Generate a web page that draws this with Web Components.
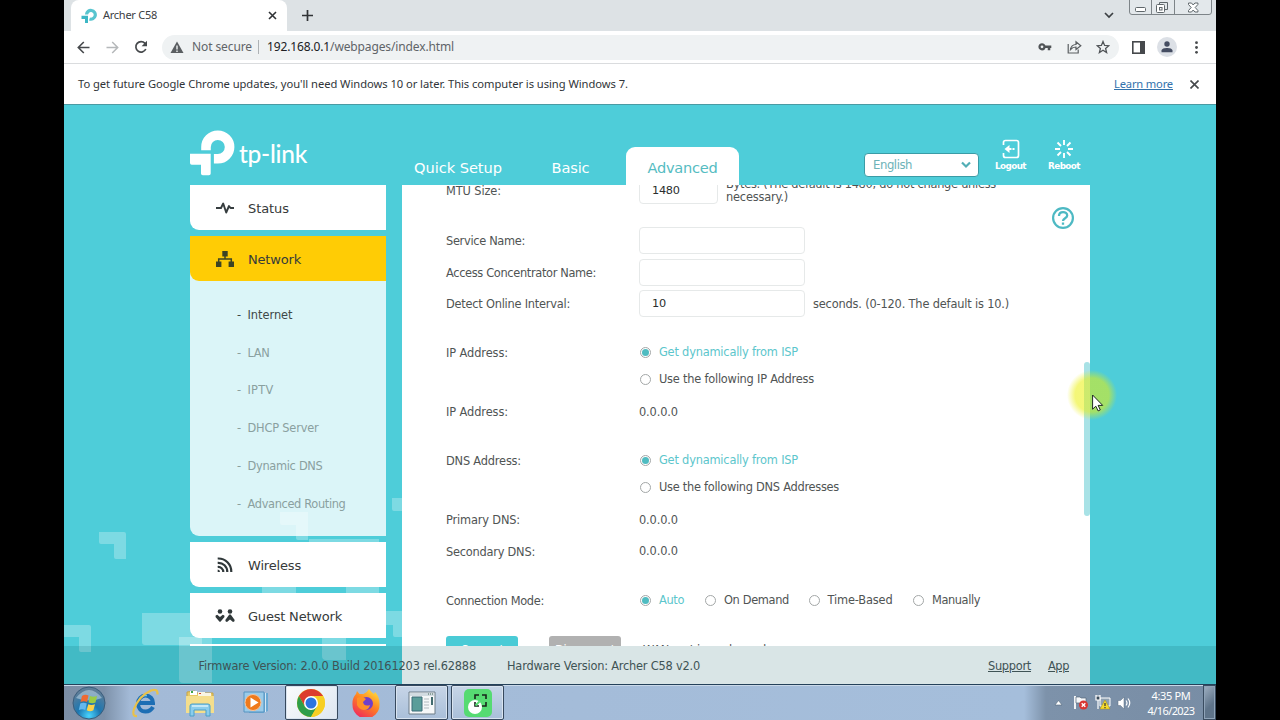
<!DOCTYPE html>
<html lang="en">
<head>
<meta charset="utf-8">
<title>Archer C58</title>
<style>
    body {
        margin: 0;
        width: 1280px;
        height: 720px;
        overflow: hidden;
        background: #000;
    }
</style>
</head>
<body>
<desktop-screen>
    <tab-strip></tab-strip>
    <address-bar></address-bar>
    <info-bar></info-bar>
    <router-page>
        <page-header slot="header"></page-header>
        <side-menu slot="menu"></side-menu>
        <form-panel slot="content">
            <form-row style="--gap: -8px">
                <fit-text slot="label" w="55">MTU Size:</fit-text>
                <text-box w="79">1480</text-box>
                <span class="hint two"><fit-text w="270">Bytes. (The default is 1480, do not change unless</fit-text><br><fit-text w="62">necessary.)</fit-text></span>
            </form-row>
            <form-row style="--gap: 23px">
                <fit-text slot="label" w="79">Service Name:</fit-text>
                <text-box w="166"></text-box>
            </form-row>
            <form-row style="--gap: 4.5px">
                <fit-text slot="label" w="150">Access Concentrator Name:</fit-text>
                <text-box w="166"></text-box>
            </form-row>
            <form-row style="--gap: 4.5px">
                <fit-text slot="label" w="124">Detect Online Interval:</fit-text>
                <text-box w="166">10</text-box>
                <span><fit-text w="196">seconds. (0-120. The default is 10.)</fit-text></span>
            </form-row>
            <form-row style="--gap: 21.5px">
                <fit-text slot="label" w="62">IP Address:</fit-text>
                <radio-item checked><fit-text w="139">Get dynamically from ISP</fit-text></radio-item>
            </form-row>
            <form-row>
                <radio-item><fit-text w="155">Use the following IP Address</fit-text></radio-item>
            </form-row>
            <form-row style="--gap: 5.5px">
                <fit-text slot="label" w="62">IP Address:</fit-text>
                <fit-text w="39">0.0.0.0</fit-text>
            </form-row>
            <form-row style="--gap: 21.5px">
                <fit-text slot="label" w="75">DNS Address:</fit-text>
                <radio-item checked><fit-text w="139">Get dynamically from ISP</fit-text></radio-item>
            </form-row>
            <form-row>
                <radio-item><fit-text w="180">Use the following DNS Addresses</fit-text></radio-item>
            </form-row>
            <form-row style="--gap: 5.5px">
                <fit-text slot="label" w="74">Primary DNS:</fit-text>
                <fit-text w="39">0.0.0.0</fit-text>
            </form-row>
            <form-row style="--gap: 4.5px">
                <fit-text slot="label" w="89">Secondary DNS:</fit-text>
                <fit-text w="39">0.0.0.0</fit-text>
            </form-row>
            <form-row style="--gap: 22px">
                <fit-text slot="label" w="98">Connection Mode:</fit-text>
                <radio-item checked><fit-text w="25">Auto</fit-text></radio-item>
                <radio-item style="margin-left: 12px"><fit-text w="65">On Demand</fit-text></radio-item>
                <radio-item style="margin-left: 10.5px"><fit-text w="65">Time-Based</fit-text></radio-item>
                <radio-item style="margin-left: 11.5px"><fit-text w="48">Manually</fit-text></radio-item>
            </form-row>
            <action-row slot="actions"></action-row>
        </form-panel>
        <page-footer slot="footer"></page-footer>
    </router-page>
    <task-bar></task-bar>
    <mouse-pointer slot="pointer"></mouse-pointer>
</desktop-screen>

<script>
class DesktopScreen extends HTMLElement {
    constructor() {
        super();
        this.attachShadow({mode: 'open'});
        this.shadowRoot.innerHTML = `
            <style>
                :host {
                    display: flex;
                    flex-direction: column;
                    position: relative;
                    box-sizing: border-box;
                    width: 1280px;
                    height: 720px;
                    padding: 0 64px;
                    overflow: hidden;
                    background: #000;
                    font: 11.4px "DejaVu Sans", sans-serif;
                    color: #505454;
                }
            </style>
            <slot></slot>
            <slot name="pointer"></slot>`;
    }
}

class TabStrip extends HTMLElement {
    constructor() {
        super();
        this.attachShadow({mode: 'open'});
        this.shadowRoot.innerHTML = `
            <style>
                :host {
                    display: flex;
                    height: 31px;
                    flex: none;
                    background: #dde2e5;
                    font: 11px "Noto Sans", sans-serif;
                    color: #3c4043;
                }
                .tab {
                    display: flex;
                    align-items: center;
                    box-sizing: border-box;
                    width: 216px;
                    margin-left: 7px;
                    padding: 0 10px 0 10px;
                    background: #fff;
                    border-radius: 8px 8px 0 0;
                }
                .tab fit-text { margin: -2px 0 0 6px; }
                .tab .x { margin-left: auto; }
                .plus { margin: 9px 0 0 14px; }
                .list { margin: 11px 15px 0 auto; }
                .win { margin-right: 4px; }
            </style>
            <div class="tab">
                <svg width="16" height="16" viewBox="0 0 16 16" fill="none">
                    <path d="M5.500 6.500A4.400 4.400 0 1 1 8.500 11" stroke="#58c5cf" stroke-width="3.200"/>
                    <path d="M.5 7.700H7v7.400H4V11H.5z" fill="#3cb7c5"/>
                </svg>
                <fit-text w="54">Archer C58</fit-text>
                <svg class="x" width="9" height="9" viewBox="0 0 9 9" stroke="#303336" stroke-width="1.600"><path d="M1 1l7 7M8 1L1 8"/></svg>
            </div>
            <svg class="plus" width="13" height="13" viewBox="0 0 13 13" stroke="#303336" stroke-width="1.700"><path d="M6.500 1v11M1 6.500h11"/></svg>
            <svg class="list" width="10" height="8" viewBox="0 0 10 8" fill="none" stroke="#3c4043" stroke-width="1.700"><path d="M1 2l4 4 4-4"/></svg>
            <svg class="win" width="83" height="16" viewBox="0 0 83 16" fill="none" stroke="#7d8488">
                <path d="M.5-1v13q0 2.500 2.500 2.500h77q2.500 0 2.500-2.500V-1M22.500 0v14.500M45.500 0v14.500" fill="#e3e8eb"/>
                <rect x="6.500" y="7.500" width="10" height="4" rx="1" stroke="#5f676b" fill="#fff"/>
                <path d="M30.500 5V2.500h8v7H36" stroke="#5f676b"/><rect x="27.500" y="4.500" width="8" height="8" rx="1" fill="#fff" stroke="#5f676b"/><rect x="30.500" y="7.500" width="2.500" height="2.500" stroke="#5f676b"/>
                <path d="M59.500 3h3l1.700 2 1.700-2h3v1.500l-2.700 3 2.700 3V12h-3l-1.700-2-1.700 2h-3v-1.500l2.700-3-2.700-3z" stroke="#5f676b" fill="#fff"/>
            </svg>`;
    }
}

class AddressBar extends HTMLElement {
    constructor() {
        super();
        this.attachShadow({mode: 'open'});
        this.shadowRoot.innerHTML = `
            <style>
                :host {
                    display: flex;
                    align-items: center;
                    box-sizing: border-box;
                    height: 33px;
                    flex: none;
                    background: #fff;
                    border-bottom: 1px solid #dadcde;
                    font: 12px "Noto Sans", sans-serif;
                    color: #606468;
                }
                svg { flex: none; }
                .field {
                    display: flex;
                    align-items: center;
                    box-sizing: border-box;
                    width: 957px;
                    height: 25px;
                    margin-left: 14px;
                    padding: 0 3px 0 8px;
                    border-radius: 13px;
                    background: #eff2f3;
                }
                .field fit-text { margin-bottom: 1px; }
                .sep { width: 1px; height: 14px; margin: 0 8px 0 6px; background: #aeb2b5; }
                b { font-weight: normal; color: #202124; }
                .key { margin-left: auto; }
                .avatar {
                    display: flex;
                    justify-content: center;
                    align-items: center;
                    width: 20px;
                    height: 20px;
                    margin: 0 20px 0 12px;
                    border-radius: 50%;
                    background: #dce0e6;
                }
            </style>
            <svg style="margin-left:13px" width="13" height="13" viewBox="0 0 13 13" fill="none" stroke="#46494c" stroke-width="1.600"><path d="M12.500 6.500H1.500M6.800 1L1.300 6.500 6.800 12"/></svg>
            <svg style="margin-left:16px" width="13" height="13" viewBox="0 0 13 13" fill="none" stroke="#b5b8ba" stroke-width="1.500"><path d="M.5 6.500h11M6.200 1l5.500 5.500L6.200 12"/></svg>
            <svg style="margin-left:15px" width="14" height="14" viewBox="0 0 14 14" fill="none" stroke="#46494c" stroke-width="1.700"><path d="M11.800 9A5.200 5.200 0 1 1 11 3.400L12 5"/><path d="M13 .8v5.400H7.600z" fill="#46494c" stroke="none"/></svg>
            <div class="field">
                <svg width="14" height="13" viewBox="0 0 14 13"><path d="M7 .5L13.500 12H.5z" fill="#5a5e61"/><path d="M7 4.500v4M7 9.500V11" stroke="#eff2f3" stroke-width="1.400"/></svg>
                <fit-text w="60" style="margin-left:8px">Not secure</fit-text>
                <span class="sep"></span>
                <fit-text w="187"><b>192.168.0.1</b>/webpages/index.html</fit-text>
                <svg class="key" width="14" height="10" viewBox="0 0 14 10" fill="none" stroke="#505457"><circle cx="4" cy="4.800" r="2.500" stroke-width="2.200"/><path d="M7 4.800h6.300M11 4.800v3.500" stroke-width="2.500"/></svg>
                <svg style="margin-left:15px" width="15" height="14" viewBox="0 0 15 14" fill="none" stroke="#5a5e61" stroke-width="1.200"><path d="M1.200 4v9h10V9.500M3.500 9.500C4 6 6 4.600 9 4.500V1.800L13.800 5.800 9 9.500V7C6.500 7 5 7.700 3.500 9.500z"/></svg>
                <svg style="margin:0 6px 0 14px" width="14" height="14" viewBox="0 0 14 14" fill="none" stroke="#505457" stroke-width="1.300"><path d="M7 1.500l1.600 3.900 4.200.3-3.200 2.700 1 4.100L7 10.200l-3.600 2.300 1-4.100L1.200 5.700l4.200-.3z"/></svg>
            </div>
            <svg style="margin-left:13px" width="13" height="13" viewBox="0 0 13 13"><rect x=".8" y=".8" width="11.400" height="11.400" fill="none" stroke="#46494c" stroke-width="1.600"/><path d="M8 1h4.500v11H8z" fill="#46494c"/></svg>
            <div class="avatar"><svg width="12" height="12" viewBox="0 0 12 12" fill="#454d62"><circle cx="6" cy="3" r="2.700"/><path d="M.5 11.300V9.500C.5 7.800 3.500 7 6 7s5.500.8 5.500 2.500v1.800z"/></svg></div>
            <svg width="3" height="13" viewBox="0 0 3 13" fill="#46494c" style="margin-left:-2px"><circle cx="1.500" cy="1.700" r="1.400"/><circle cx="1.500" cy="6.500" r="1.400"/><circle cx="1.500" cy="11.300" r="1.400"/></svg>`;
    }
}

class InfoBar extends HTMLElement {
    constructor() {
        super();
        this.attachShadow({mode: 'open'});
        this.shadowRoot.innerHTML = `
            <style>
                :host {
                    display: flex;
                    align-items: center;
                    box-sizing: border-box;
                    height: 41px;
                    flex: none;
                    padding: 0 17px 0 14px;
                    background: #fff;
                    border-bottom: 1px solid #4b9aa3;
                    font: 11.200px "Noto Sans", sans-serif;
                    color: #303438;
                }
                fit-text { margin-bottom: 2px; }
                a { margin-left: auto; color: #3272ac; text-decoration: underline; }
                svg { margin-left: 17px; }
            </style>
            <fit-text w="550">To get future Google Chrome updates, you'll need Windows 10 or later. This computer is using Windows 7.</fit-text>
            <a><fit-text w="59">Learn more</fit-text></a>
            <svg width="9" height="9" viewBox="0 0 9 9" stroke="#46494c" stroke-width="1.600"><path d="M.5.5l8 8M8.500.5l-8 8"/></svg>`;
    }
}

class RouterPage extends HTMLElement {
    constructor() {
        super();
        this.attachShadow({mode: 'open'});
        this.shadowRoot.innerHTML = `
            <style>
                :host {
                    display: flex;
                    flex-direction: column;
                    position: relative;
                    height: 579px;
                    flex: none;
                    overflow: hidden;
                    background: #4ecdd9;
                }
                .pattern { position: absolute; inset: 0; }
                .body {
                    display: flex;
                    gap: 15.500px;
                    height: 499px;
                    padding-left: 126px;
                    position: relative;
                }
            </style>
            <svg class="pattern" width="1152" height="579" viewBox="64 105 1152 579" fill="#fff" fill-opacity=".27">
                <path d="M99 532h25q2 0 2 2v25h-10q-2 0-2-2v-13h-13q-2 0-2-2z"/>
                <path d="M64 625h25q2 0 2 2v25H81q-2 0-2-2v-13H64z"/>
                <path d="M142 613h60v32h-57q-3 0-3-3z"/>
                <path d="M179 637h33v46h-29q-4 0-4-4z"/>
                <path d="M280 512h28v28h-10q-2 0-2-2v-13h-14q-2 0-2-2z"/>
                <path d="M309 539h70v54h-33v-32h-34q-3 0-3-3z"/>
                <path d="M262 580h34v20h-34zM322 637h24v23h-20q-4 0-4-4z"/>
                <path d="M392 498h10v13h-8q-2 0-2-2zM386 611h16v26h-7q-2 0-2-2v-10h-7z"/>
            </svg>
            <slot name="header"></slot>
            <div class="body"><slot name="menu"></slot><slot name="content"></slot></div>
            <slot name="footer"></slot>`;
    }
}

class PageHeader extends HTMLElement {
    constructor() {
        super();
        this.attachShadow({mode: 'open'});
        this.shadowRoot.innerHTML = `
            <style>
                :host {
                    display: flex;
                    align-items: flex-end;
                    position: relative;
                    box-sizing: border-box;
                    height: 80px;
                    flex: none;
                    padding-left: 126px;
                    color: #fff;
                    font-size: 14.600px;
                }
                .logo { display: flex; align-items: flex-start; height: 55px; width: 211px; }
                .logo fit-text { margin: 9px 0 0 4px; font: 500 24.500px/30px Lato, sans-serif; }
                .tab {
                    display: flex;
                    align-items: center;
                    justify-content: center;
                    box-sizing: border-box;
                    height: 38px;
                    padding-top: 3px;
                }
                .quick { width: 114px; }
                .basic { width: 111px; }
                .active {
                    width: 113px;
                    color: #55bcc2;
                    background: #fff;
                    border-radius: 9px 9px 0 0;
                }
                .lang {
                    display: flex;
                    align-items: center;
                    justify-content: space-between;
                    box-sizing: border-box;
                    width: 115px;
                    height: 24px;
                    margin: 0 0 8px 125px;
                    padding: 0 7px 0 8px;
                    border: 1px solid #3a9ca6;
                    border-radius: 4px;
                    background: #fff;
                    color: #6db3b8;
                    font-size: 11.700px;
                }
                .tool {
                    display: flex;
                    flex-direction: column;
                    align-items: center;
                    gap: 2px;
                    height: 46px;
                    font-size: 8.800px;
                    font-weight: bold;
                    line-height: 11px;
                }
            </style>
            <div class="logo">
                <svg width="45" height="46" viewBox="190 129.500 45 46">
                    <path d="M206 149.800v-3.300A11.800 11.800 0 1 1 217.800 158.300H213.900" fill="none" stroke="#fff" stroke-width="9.600"/>
                    <path d="M190 153.300h20.700v19.600q0 1.800-1.800 1.800h-6.100q-1.800 0-1.800-1.800v-8.600h-9.200q-1.800 0-1.800-1.800z" fill="#fff"/>
                </svg>
                <fit-text w="68">tp-link</fit-text>
            </div>
            <div class="tab quick"><fit-text w="88">Quick Setup</fit-text></div>
            <div class="tab basic"><fit-text w="38">Basic</fit-text></div>
            <div class="tab active"><fit-text w="70">Advanced</fit-text></div>
            <div class="lang">
                <fit-text w="39">English</fit-text>
                <svg width="10" height="8" viewBox="0 0 10 8" fill="none" stroke="#52aeb5" stroke-width="2.200"><path d="M1 1.500l4 4 4-4"/></svg>
            </div>
            <div class="tool" style="margin-left:16px">
                <svg width="18" height="20" viewBox="0 0 18 20" fill="none" stroke="#fff" stroke-width="1.700">
                    <path d="M1.500 6V3.500q0-2 2-2h11q2 0 2 2v13q0 2-2 2h-11q-2 0-2-2V14"/>
                    <path d="M12.500 10h-2M9.500 10h-4" stroke-width="1.800"/><path d="M7.500 6v8L2.500 10z" fill="#fff" stroke="none"/>
                </svg>
                <fit-text w="31">Logout</fit-text>
            </div>
            <div class="tool" style="margin-left:22px">
                <svg width="20" height="20" viewBox="-10 -10 20 20" stroke="#fff" stroke-width="1.900">
                    <path d="M0-9v5M0 9V4M-9 0h5M9 0H4M-6.500-6.500L-3-3M6.500 6.500L3 3M6.500-6.500L3-3M-6.500 6.500L-3 3"/>
                </svg>
                <fit-text w="32">Reboot</fit-text>
            </div>`;
    }
}

class MenuItem extends HTMLElement {
    constructor() {
        super();
        this.attachShadow({mode: 'open'});
        this.shadowRoot.innerHTML = `
            <style>
                :host {
                    display: flex;
                    align-items: center;
                    box-sizing: border-box;
                    height: 45px;
                    flex: none;
                    padding: 2px 0 0 25px;
                    background: #fff;
                    border-radius: 0 0 0 9px;
                    color: #363a3a;
                    font-size: 13px;
                }
                :host([active]) { background: #ffcc05; }
                .icon { display: flex; justify-content: center; width: 20px; margin: 0 13px 1px 0; }
            </style>
            <span class="icon"><slot name="icon"></slot></span><slot></slot>`;
    }
}

class SideMenu extends HTMLElement {
    constructor() {
        super();
        this.attachShadow({mode: 'open'});
        this.shadowRoot.innerHTML = `
            <style>
                :host {
                    display: flex;
                    flex-direction: column;
                    width: 196px;
                    height: 461px;
                    flex: none;
                    overflow: hidden;
                }
                .group {
                    flex: none;
                    height: 299.500px;
                    margin: 6px 0;
                    background: rgba(255, 255, 255, .8);
                    border-radius: 0 0 0 9px;
                }
                .group > div {
                    display: flex;
                    align-items: center;
                    height: 37.800px;
                    padding-left: 47px;
                    color: #8aa09f;
                }
                .group > div:nth-of-type(1) { margin-top: 15px; color: #3f4848; }
                i { font-style: normal; width: 10.500px; }
                menu-item + menu-item { margin-top: 6px; }
            </style>
            <menu-item>
                <svg slot="icon" width="20" height="14" viewBox="0 0 20 14" fill="none" stroke="#363d3f" stroke-width="1.900" stroke-linejoin="round"><path d="M1 7h5l2.200-4.500 3 9L14 5l1.500 2H19"/></svg>
                <fit-text w="41">Status</fit-text>
            </menu-item>
            <div class="group">
                <menu-item active>
                    <svg slot="icon" width="18" height="16" viewBox="0 0 18 16" fill="#3d4424"><path d="M6.300 0h5.400v5.500H6.300zM0 10.500h5.400V16H0zM12.600 10.500H18V16h-5.400z"/><path d="M9 5v3M2.700 11V8h12.600v3" fill="none" stroke="#3d4424" stroke-width="1.500"/></svg>
                    <fit-text w="53">Network</fit-text>
                </menu-item>
                <div><i>-</i><fit-text w="45">Internet</fit-text></div>
                <div><i>-</i><fit-text w="22">LAN</fit-text></div>
                <div><i>-</i><fit-text w="26">IPTV</fit-text></div>
                <div><i>-</i><fit-text w="71">DHCP Server</fit-text></div>
                <div><i>-</i><fit-text w="75">Dynamic DNS</fit-text></div>
                <div><i>-</i><fit-text w="98">Advanced Routing</fit-text></div>
            </div>
            <menu-item>
                <svg slot="icon" width="16" height="16" viewBox="0 0 16 16" fill="none" stroke="#30383a" stroke-width="2.200"><path d="M.7 1.500A13 13 0 0 1 14.300 15M.7 5.800A9 9 0 0 1 10.300 15M.7 10A5 5 0 0 1 6.300 15"/><path d="M.7 12.500q2.300 0 2.300 2.500H.7z" fill="#30383a" stroke="none"/></svg>
                <fit-text w="53">Wireless</fit-text>
            </menu-item>
            <menu-item>
                <svg slot="icon" width="20" height="14" viewBox="0 0 20 14" fill="#30383a"><circle cx="5" cy="2.500" r="2.300"/><circle cx="15" cy="2.500" r="2.300"/><path d="M2.200 5.700L5 8l2.800-2.300q2.200.3 1.700 2.300L5.700 12.500q-.7.700-1.400 0L.5 8q-.5-2 1.700-2.300zM14.300 5.500h1.400L19.700 11q0 2-1.700 2l-3-2.500L12 13q-1.700 0-1.700-2z"/></svg>
                <fit-text w="94">Guest Network</fit-text>
            </menu-item>
            <menu-item></menu-item>`;
    }
}

class FormPanel extends HTMLElement {
    constructor() {
        super();
        this.attachShadow({mode: 'open'});
        this.shadowRoot.innerHTML = `
            <style>
                :host {
                    display: block;
                    position: relative;
                    width: 688.500px;
                    height: 499px;
                    flex: none;
                    background: #fff;
                }
                .scroll { height: 461px; overflow: hidden; display: flow-root; }
                .help { position: absolute; top: 21px; right: 15px; }
                .bar {
                    position: absolute;
                    top: 177px;
                    right: 0;
                    width: 6px;
                    height: 154px;
                    border-radius: 3px;
                    background: #a8e2e6;
                }
            </style>
            <div class="scroll"><slot></slot><slot name="actions"></slot></div>
            <svg class="help" width="24" height="24" viewBox="0 0 24 24" fill="none" stroke="#4db9c3">
                <circle cx="12" cy="12" r="9.900" stroke-width="2.200"/>
                <path d="M8 10C8 4.700 16.200 5 16.200 9.500c0 2.900-4.200 2.600-4.200 5.500M12 16.500v2.300" stroke-width="2.300"/>
            </svg>
            <div class="bar"></div>`;
    }
}

class FormRow extends HTMLElement {
    constructor() {
        super();
        this.attachShadow({mode: 'open'});
        this.shadowRoot.innerHTML = `
            <style>
                :host {
                    display: grid;
                    grid-template-columns: 193px 1fr;
                    align-items: center;
                    height: 27px;
                    margin-top: var(--gap, 0);
                    padding-left: 44.500px;
                }
                .label { padding-top: 1px; }
                .value { display: flex; align-items: center; gap: 8px; }
                ::slotted(span) { line-height: 13px; padding-top: 1px; white-space: nowrap; }
            </style>
            <div class="label"><slot name="label"></slot></div>
            <div class="value"><slot></slot></div>`;
    }
}

class TextBox extends HTMLElement {
    constructor() {
        super();
        this.attachShadow({mode: 'open'});
        this.shadowRoot.innerHTML = `
            <style>
                :host {
                    display: flex;
                    align-items: center;
                    box-sizing: border-box;
                    height: 27px;
                    padding-left: 12px;
                    border: 1px solid #e6e9e9;
                    border-radius: 4px;
                    background: #fff;
                    color: #2a2e2e;
                    font-size: 11.300px;
                    letter-spacing: -.3px;
                }
            </style>
            <slot></slot>`;
    }
    connectedCallback() {
        this.style.width = this.getAttribute('w') + 'px';
    }
}

class RadioItem extends HTMLElement {
    constructor() {
        super();
        this.attachShadow({mode: 'open'});
        this.shadowRoot.innerHTML = `
            <style>
                :host { display: flex; align-items: center; }
                :host([checked]) { color: #5cc6cc; }
                .dot {
                    display: flex;
                    align-items: center;
                    justify-content: center;
                    box-sizing: border-box;
                    width: 11px;
                    height: 11px;
                    margin: 1px 8px 0 1px;
                    border: 1px solid #a3a7a7;
                    border-radius: 50%;
                }
                :host([checked]) .dot::after {
                    content: '';
                    width: 7px;
                    height: 7px;
                    border-radius: 50%;
                    background: #4fbcc1;
                }
            </style>
            <span class="dot"></span><slot></slot>`;
    }
}

class ActionRow extends HTMLElement {
    constructor() {
        super();
        this.attachShadow({mode: 'open'});
        this.shadowRoot.innerHTML = `
            <style>
                :host { display: flex; margin-top: 22.500px; padding-left: 44.500px; line-height: 28px; }
                div {
                    width: 72px;
                    height: 27px;
                    margin-right: 31px;
                    border-radius: 3px 3px 0 0;
                    background: #4acbd6;
                    color: #fff;
                    text-align: center;
                }
                .off { background: #b1b1b1; margin-right: 22px; }
            </style>
            <div><fit-text w="43">Connect</fit-text></div>
            <div class="off"><fit-text w="60">Disconnect</fit-text></div>
            <fit-text w="126">WAN port is unplugged.</fit-text>`;
    }
}

class PageFooter extends HTMLElement {
    constructor() {
        super();
        this.attachShadow({mode: 'open'});
        this.shadowRoot.innerHTML = `
            <style>
                :host {
                    display: flex;
                    align-items: center;
                    position: absolute;
                    left: 0;
                    right: 0;
                    bottom: 0;
                    box-sizing: border-box;
                    height: 38px;
                    padding: 2px 147px 0 134.500px;
                    background: rgba(0, 80, 85, .15);
                    color: #3f5355;
                }
                .hw { margin-left: 31px; }
                a { margin-left: 17px; text-decoration: underline; }
                .first { margin-left: auto; }
            </style>
            <fit-text w="277.500">Firmware Version: 2.0.0 Build 20161203 rel.62888</fit-text>
            <fit-text class="hw" w="193">Hardware Version: Archer C58 v2.0</fit-text>
            <a class="first"><fit-text w="43">Support</fit-text></a>
            <a><fit-text w="21">App</fit-text></a>`;
    }
}

class TaskBar extends HTMLElement {
    constructor() {
        super();
        this.attachShadow({mode: 'open'});
        this.shadowRoot.innerHTML = `
            <style>
                :host {
                    display: flex;
                    align-items: stretch;
                    box-sizing: border-box;
                    height: 36px;
                    flex: none;
                    border-top: 1px solid #24415a;
                    background: linear-gradient(90deg, #7b8ea5 0, #7d91a9 40px, #a3bad7 66px, #a5bedb 960px, #7d92aa 982px, #788da5 100%);
                    box-shadow: inset 0 1px #c9d8e8;
                    font: 11px "Noto Sans", sans-serif;
                    color: #fff;
                }
                .slot { display: flex; align-items: center; justify-content: center; box-sizing: border-box; width: 55.500px; }
                .start { width: 49px; }
                .open { width: 53px; margin: 0 1px; border: 1px solid #37495e; border-radius: 2px; background: linear-gradient(#c7d5e7, #a9bfd9); box-shadow: inset 0 0 0 1px #d9e4f0; }
                .front { background: linear-gradient(135deg, #fbfcfd, #dde6f1); }
                .tray { display: flex; align-items: center; margin-left: auto; }
                .clock { display: flex; flex-direction: column; align-items: center; width: 48px; margin: 0 8px 0 15px; line-height: 15px; }
                .peek { width: 11px; border: 1px solid #3a4c60; background: linear-gradient(135deg, #9fb0c2, #5e7389 60%); box-shadow: inset 0 0 0 1px #8fa3b8; }
            </style>
            <div class="slot start">
                <svg width="34" height="34" viewBox="0 0 34 34">
                    <defs><radialGradient id="orb" cx=".5" cy=".9" r=".8"><stop offset="0" stop-color="#49d5ff"/><stop offset=".45" stop-color="#1c77b1"/><stop offset="1" stop-color="#5d7d98"/></radialGradient></defs>
                    <circle cx="17" cy="17" r="16" fill="url(#orb)" stroke="#3b5d7b"/>
                    <path d="M4 12Q17-4 30 12 17 17 4 12z" fill="#dcebf4" opacity=".45"/>
                    <path d="M10 10q3-2 6.500-.5L15 16q-3-1.500-6.500 0z" fill="#ef6a32"/><path d="M18 10q3 1.500 7 0l-1.500 6.500q-3 1.500-7 0z" fill="#9bcc44"/>
                    <path d="M8.300 17.500q3-1.500 6.500 0L13.300 24q-3-1.500-6.500 0z" fill="#64b8ee"/><path d="M16.300 18.300q3 1.300 6.700 0l-1.600 6q-3.400 1.700-6.700 0z" fill="#fbd24a"/>
                </svg>
            </div>
            <div class="slot" style="margin-left:4px">
                <svg width="30" height="30" viewBox="0 0 30 30" fill="none">
                    <path d="M23 19Q20.500 23.500 15.500 23.500C10.500 23.500 8 19.500 8 15.500 8 11 11.500 7.500 15.500 7.500c4.500 0 7.500 3.500 7.500 7.500H9.500" stroke="#1d6eb4" stroke-width="4"/>
                    <path d="M9 12q2-5 8-4.500" stroke="#65c4ef" stroke-width="1.500"/>
                    <path d="M7 28Q1.500 28.500 4 21 9 8 21 2.500q7-2.500 6.500 4" stroke="#e9c14a" stroke-width="2.200"/>
                </svg>
            </div>
            <div class="slot">
                <svg width="30" height="28" viewBox="0 0 30 28">
                    <path d="M2 3l8-1 2 2h16v19H2z" fill="#e7c964" stroke="#c9a545"/><path d="M5 2h7v4H5z" fill="#fff"/><path d="M6 2h2v2H6z" fill="#39a548"/><path d="M13 3h7v4h-7zM20 4h6v4h-6z" fill="#f8f5e3"/><path d="M14 4h2v1h-2z" fill="#d34430"/>
                    <path d="M1 7h28v17H1z" fill="#f4de8c"/>
                    <path d="M5 17q0-2 2-2h16q2 0 2 2v10h-4v-6H9v6H5z" fill="#8acdec" stroke="#4b9fc9"/><path d="M7 17h16" stroke="#d6f1fb" stroke-width="1.500"/>
                </svg>
            </div>
            <div class="slot">
                <svg width="26" height="24" viewBox="0 0 26 24">
                    <path d="M10 2h15v18l-5 2H6V2z" fill="#6aa9d4"/><path d="M1 1h20v20H1z" fill="#9acbe9" stroke="#5793c0"/><path d="M22.500 2v19" stroke="#d2e8f6"/>
                    <circle cx="10" cy="11.500" r="8" fill="#ef7a1c" stroke="#f9c49b"/><path d="M7.500 6.500v10l8-5z" fill="#fff"/>
                </svg>
            </div>
            <div class="slot open front">
                <svg width="28" height="28" viewBox="0 0 28 28">
                    <circle cx="14" cy="14" r="14" fill="#f7cf23"/>
                    <path d="M1.900 7A14 14 0 0 1 26.100 7H14L7.900 17.500z" fill="#dc3d2f"/>
                    <path d="M1.900 7A14 14 0 0 0 14 28l6.100-10.500H7.900z" fill="#2f9e4a"/>
                    <path d="M26.100 7A14 14 0 0 1 14 28l6.100-10.500L20 10.500 14 7z" fill="#f7cf23"/>
                    <circle cx="14" cy="14" r="7" fill="#fff"/><circle cx="14" cy="14" r="5.500" fill="#2c74e0"/>
                </svg>
            </div>
            <div class="slot">
                <svg width="28" height="28" viewBox="0 0 28 28">
                    <defs><linearGradient id="fox" x1=".8" y1="0" x2=".2" y2="1"><stop offset="0" stop-color="#ffe03e"/><stop offset=".45" stop-color="#ff8420"/><stop offset="1" stop-color="#ee2362"/></linearGradient></defs>
                    <path d="M17 0q2 3 5 5l1-2q5 5 4.500 13A13.500 13.500 0 0 1 .5 16Q0 9 4 5l1-3 2.500 3h4q3-1 5.500-5z" fill="url(#fox)"/>
                    <circle cx="14.500" cy="14.500" r="6.500" fill="#703fc9"/><path d="M5 9q5-2.500 9 1l-3 3q1 5 7 3-1 5-6 5-5-.5-7-5z" fill="#ff9025"/>
                </svg>
            </div>
            <div class="slot open">
                <svg width="28" height="24" viewBox="0 0 28 24">
                    <path d="M1 1h26v22H1z" fill="#f5f7f8" stroke="#6d7c88"/><path d="M2 2h24v3H2z" fill="#d2dbe1"/><path d="M4 6h10v14H4z" fill="#5a9d99" stroke="#3b6c79"/>
                    <path d="M16 8h5M16 11h5M16 14h5M16 17h5" stroke="#b1babf"/><path d="M24 6v8" stroke="#416b6e" stroke-width="2"/><path d="M20 3h1M22 3h1M24 3h1" stroke="#465"/>
                </svg>
            </div>
            <div class="slot open" style="margin-left:2px">
                <svg width="28" height="28" viewBox="0 0 28 28">
                    <rect width="28" height="28" rx="5" fill="#56db72"/><circle cx="11" cy="18" r="7" fill="#fff"/>
                    <path d="M11 10V6h4M18 6h4v4M22 13v4h-4M15 17h-4v-4" fill="none" stroke="#18251b" stroke-width="1.600"/><path d="M11.500 16.500l4-4" stroke="#56db72" stroke-width="2"/>
                </svg>
            </div>
            <div class="tray">
                <svg width="9" height="6" viewBox="0 0 9 6"><path d="M4.500.5L8 5H1z" fill="#fff" stroke="#56697d" stroke-width=".6"/></svg>
                <svg style="margin-left:10px" width="16" height="15" viewBox="0 0 16 15"><path d="M2 1v13" stroke="#fff" stroke-width="1.800"/><path d="M3 2h4l1 1h5v6H8L7 8H3z" fill="#f6f8fa" stroke="#56687a" stroke-width=".7"/><circle cx="10.500" cy="10" r="4.500" fill="#d83734"/><path d="M8.700 8.200l3.600 3.600M12.300 8.200l-3.600 3.600" stroke="#fff" stroke-width="1.400"/></svg>
                <svg style="margin-left:6px" width="16" height="15" viewBox="0 0 16 15"><path d="M5 3h10v8H5z" fill="#8ea0b0" stroke="#fff"/><path d="M1 1h4v4H1zM3 5v9M1 0v2M5 0v2" stroke="#fff" stroke-width="1.200" fill="#3d4d5c"/><path d="M10 5l5 9H5z" fill="#f5db2c" stroke="#a98e0c" stroke-width=".5"/><path d="M10 8v3M10 12v1.200" stroke="#333" stroke-width="1.200"/></svg>
                <svg style="margin-left:6px" width="15" height="14" viewBox="0 0 15 14" fill="none" stroke="#fff"><path d="M1 4.500h2.500L7 1v12L3.500 9.500H1z" fill="#fff" stroke="#5b6d80" stroke-width=".5"/><path d="M9 4.500q2 2.500 0 5M11 2.500q3.500 4.500 0 9" stroke-width="1.200"/></svg>
                <div class="clock"><fit-text w="39">4:35 PM</fit-text><fit-text w="47">4/16/2023</fit-text></div>
            </div>
            <div class="peek"></div>`;
    }
}

class MousePointer extends HTMLElement {
    constructor() {
        super();
        this.attachShadow({mode: 'open'});
        this.shadowRoot.innerHTML = `
            <style>
                :host {
                    position: absolute;
                    left: 1066px;
                    top: 369px;
                    width: 52px;
                    height: 52px;
                    background: radial-gradient(circle, rgba(235, 240, 10, .55) 46%, rgba(240, 245, 20, 0) 68%);
                    border-radius: 50%;
                }
                svg { position: absolute; left: 26px; top: 25px; }
            </style>
            <svg width="12" height="18" viewBox="0 0 12 18"><path d="M.6 1v14.200l3.200-3 2.300 4.700 2.200-1-2.200-4.500h4.600z" fill="#fff" stroke="#1d2a20"/></svg>`;
    }
}

// spreads its text over the width given in the w attribute
class FitText extends HTMLElement {
    constructor() {
        super();
        this.attachShadow({mode: 'open'});
        this.shadowRoot.innerHTML = `
            <style>
                :host { display: inline-block; white-space: nowrap; text-decoration: inherit; }
            </style>
            <slot></slot>`;
    }
    connectedCallback() {
        const space = (this.getAttribute('w') - this.getBoundingClientRect().width) / this.textContent.length;
        this.style.letterSpacing = space + 'px';
    }
}

customElements.define('desktop-screen', DesktopScreen);
customElements.define('tab-strip', TabStrip);
customElements.define('address-bar', AddressBar);
customElements.define('info-bar', InfoBar);
customElements.define('router-page', RouterPage);
customElements.define('page-header', PageHeader);
customElements.define('menu-item', MenuItem);
customElements.define('side-menu', SideMenu);
customElements.define('form-panel', FormPanel);
customElements.define('form-row', FormRow);
customElements.define('text-box', TextBox);
customElements.define('radio-item', RadioItem);
customElements.define('action-row', ActionRow);
customElements.define('page-footer', PageFooter);
customElements.define('task-bar', TaskBar);
customElements.define('mouse-pointer', MousePointer);
customElements.define('fit-text', FitText);
</script>
</body>
</html>
